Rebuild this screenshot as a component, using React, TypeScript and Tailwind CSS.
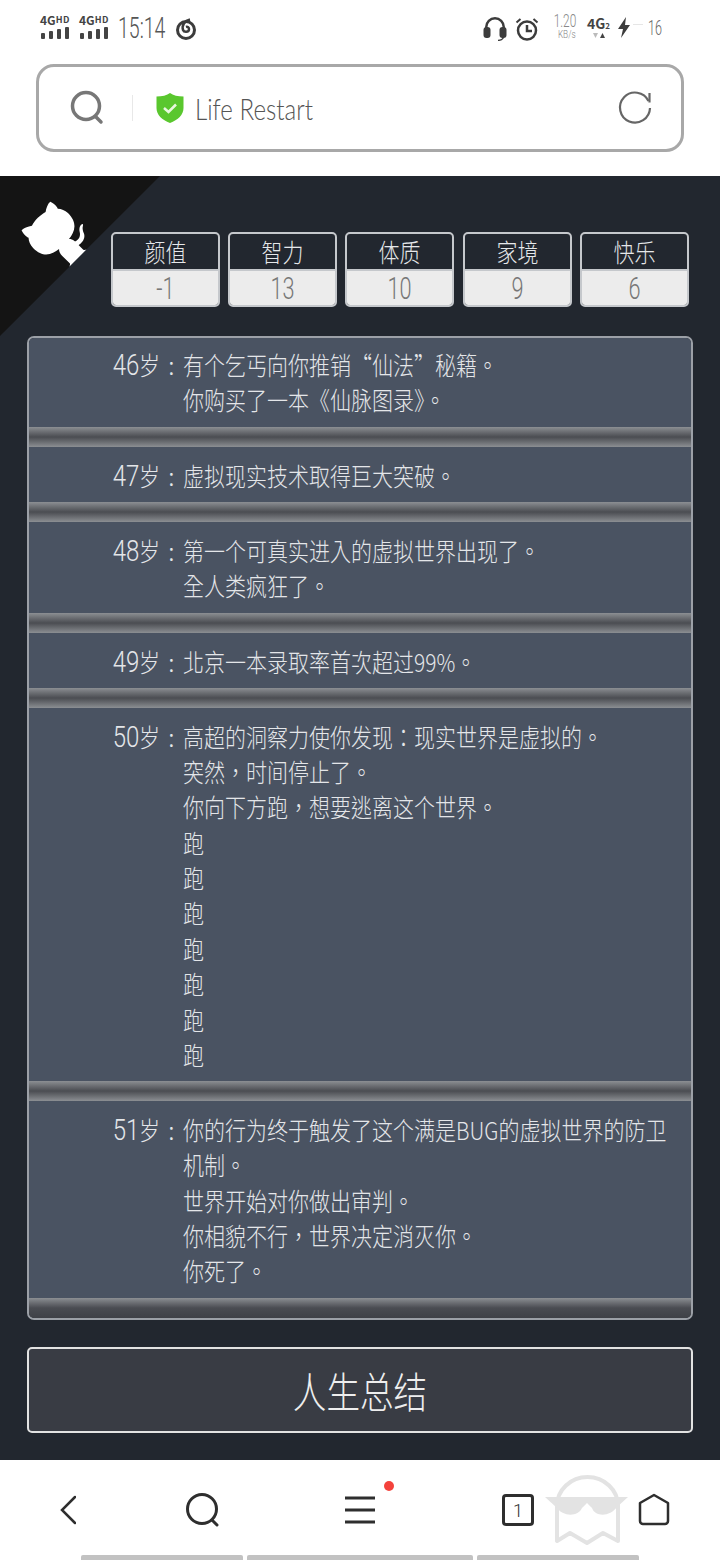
const events = [
  { age: 46, lines: ['有个乞丐向你推销“仙法”秘籍。', '你购买了一本《仙脉图录》。'] },
  { age: 47, lines: ['虚拟现实技术取得巨大突破。'] },
  { age: 48, lines: ['第一个可真实进入的虚拟世界出现了。', '全人类疯狂了。'] },
  { age: 49, lines: ['北京一本录取率首次超过99%。'] },
  {
    age: 50,
    lines: ['高超的洞察力使你发现：现实世界是虚拟的。', '突然，时间停止了。', '你向下方跑，想要逃离这个世界。', '跑', '跑', '跑', '跑', '跑', '跑', '跑'],
  },
  {
    age: 51,
    lines: ['你的行为终于触发了这个满是BUG的虚拟世界的防卫机制。', '世界开始对你做出审判。', '你相貌不行，世界决定消灭你。', '你死了。'],
  },
];

const stats = [
  { label: '颜值', value: '-1' },
  { label: '智力', value: '13' },
  { label: '体质', value: '10' },
  { label: '家境', value: '9' },
  { label: '快乐', value: '6' },
];

function Signal() {
  return (
    <div className="relative h-[26px] w-[31px] text-[#444]">
      <svg width="31" height="26" viewBox="0 0 31 26" className="fill-current">
        <rect x="1" y="19" width="4" height="6" rx="1" />
        <rect x="9" y="17" width="4" height="8" rx="1" />
        <rect x="17" y="15" width="4" height="10" rx="1" />
        <rect x="25" y="13" width="4" height="12" rx="1" />
      </svg>
      <span className="absolute top-[-3px] left-0 text-[12px] font-bold leading-[18px] whitespace-nowrap">
        4G<span className="relative top-[-2px] text-[9px] tracking-[0.5px]">HD</span>
      </span>
    </div>
  );
}

function StatusBar() {
  return (
    <div className="flex h-[64px] items-start pt-[14px] pr-[58px] pl-[40px] text-[#555]">
      <div className="flex gap-[8px]">
        <Signal />
        <Signal />
      </div>
      <span className="ml-[8px] w-[48px] origin-left scale-x-[0.65] font-['Roboto'] text-[30px] leading-[28px] font-light whitespace-nowrap">15:14</span>
      <svg width="22" height="24" viewBox="0 0 22 24" className="mt-[3px] ml-[9px]" fill="none" stroke="#3c3c3c" strokeWidth="3">
        <circle cx="11" cy="13" r="8.5" />
        <path d="M15 2.500C10 3.500 6.500 8 8 13c1 2.600 5.500 2.500 6-.5.3-2-1.500-3-3-2.500" strokeWidth="2.500" />
      </svg>
      <svg width="24" height="26" viewBox="0 0 24 26" className="mt-[2px] ml-auto" fill="#3c3c3c">
        <path d="M2 14V11a10 10 0 0 1 20 0v3h-2.500V11a7.500 7.500 0 0 0-15 0v3z" />
        <rect x="0.500" y="11" width="7" height="11" rx="3" />
        <rect x="16.500" y="11" width="7" height="11" rx="3" />
        <path d="M21 21c0 2.500-3 4-6 4v-1.200c2.500 0 4.800-1.200 4.800-2.800z" />
      </svg>
      <svg width="24" height="24" viewBox="0 0 24 24" className="mt-[3px] ml-[8px]" fill="none" stroke="#3c3c3c" strokeWidth="2.500">
        <circle cx="12" cy="13.500" r="9" />
        <path d="M12 8v6h5" />
        <path d="M1.500 5.500 5.500 2M22.500 5.500 18.500 2" strokeWidth="2" />
      </svg>
      <div className="mt-[-2px] ml-[11px] flex w-[26px] flex-col items-end font-['Roboto'] font-light text-[#888]">
        <span className="origin-right scale-x-[0.66] text-[18px] leading-[17px] font-light whitespace-nowrap">1.20</span>
        <span className="origin-right scale-x-[0.75] text-[11px] leading-[12px] whitespace-nowrap">KB/s</span>
      </div>
      <div className="relative ml-[11px] h-[26px] w-[24px] text-[#444]">
        <span className="absolute top-0 left-0 text-[14px] leading-[18px] font-bold whitespace-nowrap">
          4G<span className="text-[8px]">2</span>
        </span>
        <svg width="14" height="8" viewBox="0 0 14 8" className="absolute top-[18px] left-[5px]">
          <path d="M1 1h5L3.500 6z" fill="#bbb" />
          <path d="M8 6h5L10.500 1z" fill="#444" />
        </svg>
      </div>
      <svg width="14" height="22" viewBox="0 0 14 22" className="mt-[3px] ml-[6px]" fill="#3c3c3c">
        <path d="M9 0 1 12h5l-2 9 9-13H8z" />
      </svg>
      <div className="mt-[10px] ml-[2px] h-px w-[10px] bg-[#e6e6e6]" />
      <span className="ml-[5px] w-[14px] origin-left scale-x-[0.6] font-['Roboto'] text-[21px] leading-[28px] font-light whitespace-nowrap text-[#666]">16</span>
    </div>
  );
}

function AddressBar() {
  return (
    <div className="mx-[36px] flex h-[88px] items-center rounded-[18px] border-[3px] border-[#a8a8a8] bg-white">
      <svg width="36" height="36" viewBox="0 0 36 36" className="ml-[30px]" fill="none" stroke="#777" strokeWidth="3.500" strokeLinecap="round">
        <circle cx="17" cy="16" r="13.500" />
        <path d="M27 27l5 5" />
      </svg>
      <div className="ml-[27px] h-[26px] w-px bg-[#e8e8e8]" />
      <svg width="28" height="30" viewBox="0 0 28 30" className="ml-[23px]">
        <path d="M14 0c3 2.500 8 3.500 13.500 3.500V15c0 7-5.500 11.800-13.500 15C6 26.800.5 22 .5 15V3.500C6 3.500 11 2.500 14 0z" fill="#5ac72e" />
        <path d="M8 15l4.500 4L20 11.500" fill="none" stroke="#e9f8df" strokeWidth="2.500" />
      </svg>
      <span className="ml-[11px] w-[120px] origin-left scale-x-[0.805] font-['Lato'] text-[30px] leading-none font-light whitespace-nowrap text-[#555]">Life Restart</span>
      <svg width="36" height="36" viewBox="0 0 36 36" className="mr-[28px] ml-auto" fill="none" stroke="#666" strokeWidth="2.200">
        <path d="M31.500 11A15 15 0 1 0 33 18" />
        <path d="M32.500 3v9.500" />
      </svg>
    </div>
  );
}

function Corner() {
  return (
    <svg width="160" height="160" viewBox="0 0 250 250" className="absolute top-0 left-0 -scale-x-100">
      <path d="M0 0L115 115H130L142 142L250 250V0Z" fill="#141414" />
      <path
        d="M128.300 109C113.800 99.700 119 89.600 119 89.600C122 82.700 120.500 78.600 120.500 78.600C119.200 72 123.400 76.300 123.400 76.300C127.300 80.900 125.500 87.300 125.500 87.300C122.900 97.600 130.600 101.900 134.400 103.200"
        fill="#fff"
      />
      <path
        d="M115 115C114.900 115.100 118.700 116.500 119.800 115.400L133.700 101.600C136.900 99.200 139.900 98.400 142.200 98.600C133.800 88 127.500 74.400 143.800 58C148.500 53.400 154 51.200 159.700 51C160.300 49.400 163.200 43.600 171.400 40.100C171.400 40.100 176.100 42.500 178.800 56.200C183.100 58.600 187.200 61.800 190.900 65.400C194.500 69 197.700 73.200 200.100 77.600C213.800 80.200 216.300 84.900 216.300 84.900C212.700 93.100 206.900 96 205.400 96.600C205.100 102.400 203 107.800 198.300 112.500C181.900 128.900 168.300 122.500 157.700 114.100C157.900 116.900 156.700 120.900 152.700 124.900L141 136.500C139.800 137.700 141.600 141.900 141.800 141.800Z"
        fill="#fff"
      />
    </svg>
  );
}

function Stat({ label, value }: { label: string; value: string }) {
  return (
    <div className="flex h-[75px] w-[109px] flex-col overflow-hidden rounded-[5px] border-2 border-[#c5c8cc]">
      <div className="h-[35px] scale-x-[0.84] text-center text-[25px] leading-[35px] font-light text-[#e6e8ea]">{label}</div>
      <div className="flex-1 border-t-2 border-[#c5c8cc] bg-[#ececec] text-center">
        <div className="scale-x-[0.7] font-['Roboto'] text-[31px] leading-[35px] font-light text-[#777]">{value}</div>
      </div>
    </div>
  );
}

function Divider({ last }: { last?: boolean }) {
  return (
    <div
      className={
        last
          ? 'h-[20px] bg-gradient-to-b from-[#8c8f93] via-[#4a4c52] to-[#3f4147]'
          : 'h-[19.800px] bg-gradient-to-b from-[#8c8f93] via-[#4b4d52] to-[#8c8f93]'
      }
    />
  );
}

function EventRow({ age, lines, first }: { age: number; lines: string[]; first?: boolean }) {
  return (
    <div className={first ? 'flex bg-[#4a5362] pt-[8.500px] pb-[10px] text-[25px] leading-[35.350px] font-light text-[#e4e6e9]' : 'flex bg-[#4a5362] pt-[11px] pb-[9px] text-[25px] leading-[35.350px] font-light text-[#e4e6e9]'}>
      <div className="flex w-[131px] shrink-0 justify-end whitespace-nowrap">
        <span className="inline-block origin-right scale-x-[0.8] font-['Roboto'] text-[30px] font-light">{age}</span>
        <span className="mr-[-4px] inline-block origin-left scale-x-[0.84]">岁</span>
      </div>
      <div className="w-[23px] shrink-0 text-center">:</div>
      <div className="w-[590px] shrink-0 origin-left scale-x-[0.84]">
        {lines.map((line, i) => (
          <div key={i}>{line}</div>
        ))}
      </div>
    </div>
  );
}

function BottomNav() {
  return (
    <div className="relative h-[100px] bg-white">
      <div className="flex items-center pt-[33px] pl-[60px]">
        <svg width="16" height="30" viewBox="0 0 16 30" fill="none" stroke="#2e2e2e" strokeWidth="2.500" strokeLinecap="round">
          <path d="M15 2 2 15l13 13" />
        </svg>
        <svg width="34" height="34" viewBox="0 0 34 34" className="ml-[110px]" fill="none" stroke="#2e2e2e" strokeWidth="3" strokeLinecap="round">
          <circle cx="16" cy="16" r="14.500" />
          <path d="M26 27l5 5" />
        </svg>
        <svg width="30" height="28" viewBox="0 0 30 28" className="ml-[125px]" fill="none" stroke="#2e2e2e" strokeWidth="3">
          <path d="M0 2h30M0 14h30M0 26h30" />
        </svg>
        <div className="relative ml-[127px] flex h-[32px] w-[32px] items-center justify-center rounded-[4px] border-[3px] border-[#2e2e2e] font-['Roboto'] text-[18px] font-light text-[#2e2e2e]">
          1
        </div>
        <svg width="32" height="33" viewBox="0 0 32 33" className="mt-[-2px] ml-[104px]" fill="none" stroke="#2e2e2e" strokeWidth="2.500" strokeLinejoin="round">
          <path d="M16 2 30 10v18a3 3 0 0 1-3 3H5a3 3 0 0 1-3-3V10z" />
        </svg>
      </div>
      <div className="absolute top-[21px] left-[384px] h-[10px] w-[10px] rounded-full bg-[#f4423c]" />
      <svg width="84" height="72" viewBox="0 0 84 72" className="absolute top-[15px] left-[545px]" fill="none">
        <path d="M12 66V31a30.500 29 0 0 1 61 0V66L58 58 42 68 25 58z" stroke="#e3e3e3" strokeWidth="4" strokeLinejoin="round" />
        <path d="M0 22H83L72 32C65 42 50 42 47 33L42 28L37 33C33 42 18 42 11 32Z" fill="#e3e3e3" />
      </svg>
      <div className="absolute bottom-0 left-[81px] flex h-[5px] gap-[4px]">
        <div className="w-[162px] rounded-t-[2px] bg-[#c2c2c2]" />
        <div className="w-[226px] rounded-t-[2px] bg-[#c2c2c2]" />
        <div className="w-[162px] rounded-t-[2px] bg-[#c2c2c2]" />
      </div>
    </div>
  );
}

export default function App() {
  return (
    <div className="h-[1560px] w-[720px] overflow-hidden bg-white font-['Noto_Sans_CJK_TC',sans-serif]">
      <StatusBar />
      <AddressBar />
      <div className="h-[24px]" />
      <section className="relative flex h-[1284px] flex-col bg-[#22272f] px-[27px] pt-[56px]">
        <Corner />
        <div className="relative ml-[83.700px] flex gap-[8.400px]">
          {stats.map((s) => (
            <Stat key={s.label} {...s} />
          ))}
        </div>
        <div className="relative mt-[29px] overflow-hidden rounded-[7px] border-2 border-[#9ca0a7]">
          {events.map((e, i) => (
            <div key={e.age}>
              <EventRow age={e.age} lines={e.lines} first={i === 0} />
              <Divider last={i === events.length - 1} />
            </div>
          ))}
        </div>
        <div className="mt-[27px] flex h-[86.500px] items-center justify-center rounded-[5px] border-2 border-[#e2e2e2] bg-[#393c44]">
          <span className="scale-x-[0.8] text-[42px] font-light text-[#eeeeee]">人生总结</span>
        </div>
      </section>
      <BottomNav />
    </div>
  );
}
